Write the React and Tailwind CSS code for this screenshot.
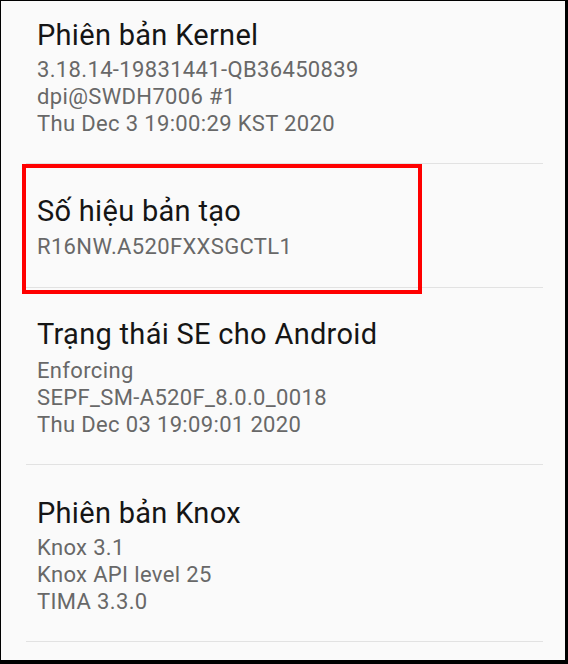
import React from "react";

const items = [
  {
    title: "Phiên bản Kernel",
    lines: ["3.18.14-19831441-QB36450839", "dpi@SWDH7006 #1", "Thu Dec 3 19:00:29 KST 2020"],
    pad: "pt-[17px] pb-[26px]",
    gap: "mt-[4px]",
  },
  {
    title: "Số hiệu bản tạo",
    lines: ["R16NW.A520FXXSGCTL1"],
    pad: "pt-[30px] pb-[27px]",
    gap: "mt-[5px]",
    marked: true,
  },
  {
    title: "Trạng thái SE cho Android",
    lines: ["Enforcing", "SEPF_SM-A520F_8.0.0_0018", "Thu Dec 03 19:09:01 2020"],
    pad: "pt-[29px] pb-[26px]",
    gap: "mt-[6px]",
  },
  {
    title: "Phiên bản Knox",
    lines: ["Knox 3.1", "Knox API level 25", "TIMA 3.3.0"],
    pad: "pt-[31px] pb-[26px]",
    gap: "mt-[4px]",
  },
];

function InfoItem({ title, lines, pad, gap }) {
  return (
    <div className={`px-[11px] ${pad}`}>
      <div className="text-[29px] leading-[34px] tracking-[0.3px] text-[#151515]">{title}</div>
      <div className={`${gap} text-[22px] leading-[27px] tracking-[0.35px] text-[#686868]`}>
        {lines.map((l) => (
          <div key={l}>{l}</div>
        ))}
      </div>
    </div>
  );
}

export default function App() {
  return (
    <div
      className="relative h-[664px] w-[568px] overflow-hidden border-l border-t border-r-[3px] border-b-[4px] border-black bg-[#fafafa]"
      style={{ fontFamily: "Roboto, 'Noto Sans', sans-serif" }}
    >
      <div className="ml-[25px] mr-[22px]">
        {items.map((it) => (
          <div key={it.title} className="relative border-b border-[#e2e2e2]">
            <InfoItem {...it} />
            {it.marked && (
              <div className="pointer-events-none absolute left-[-4px] right-[121px] top-0 bottom-[-7px] border-4 border-[#ff0000]" />
            )}
          </div>
        ))}
      </div>
    </div>
  );
}
